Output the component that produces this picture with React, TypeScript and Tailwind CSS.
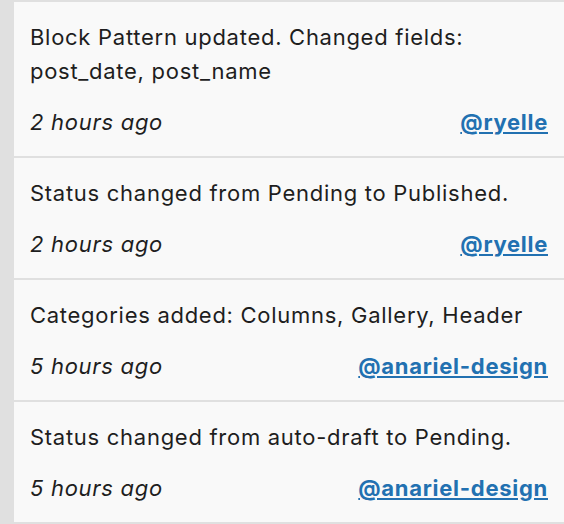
const ITEMS = [
  { text: "Block Pattern updated. Changed fields: post_date, post_name", time: "2 hours ago", user: "@ryelle" },
  { text: "Status changed from Pending to Published.", time: "2 hours ago", user: "@ryelle" },
  { text: "Categories added: Columns, Gallery, Header", time: "5 hours ago", user: "@anariel-design" },
  { text: "Status changed from auto-draft to Pending.", time: "5 hours ago", user: "@anariel-design" },
];

export default function App() {
  return (
    <div
      className="h-[524px] w-[564px] bg-[#e0e0e0] pl-[14px] pt-[2px] text-[22px] leading-[34px] tracking-[0.72px] text-[#1e1e1e]"
      style={{ fontFamily: "Inter, 'Noto Sans', sans-serif" }}
    >
      {ITEMS.map((item) => (
        <div key={item.text} className="mb-[2px] bg-[#f9f9f9] pb-[17px] pl-[16px] pr-[16px] pt-[18px]">
          <p>{item.text}</p>
          <div className="mt-[17px] flex items-center justify-between">
            <span className="italic">{item.time}</span>
            <a href="#" className="font-bold text-[#2271b1] underline underline-offset-2">
              {item.user}
            </a>
          </div>
        </div>
      ))}
    </div>
  );
}
